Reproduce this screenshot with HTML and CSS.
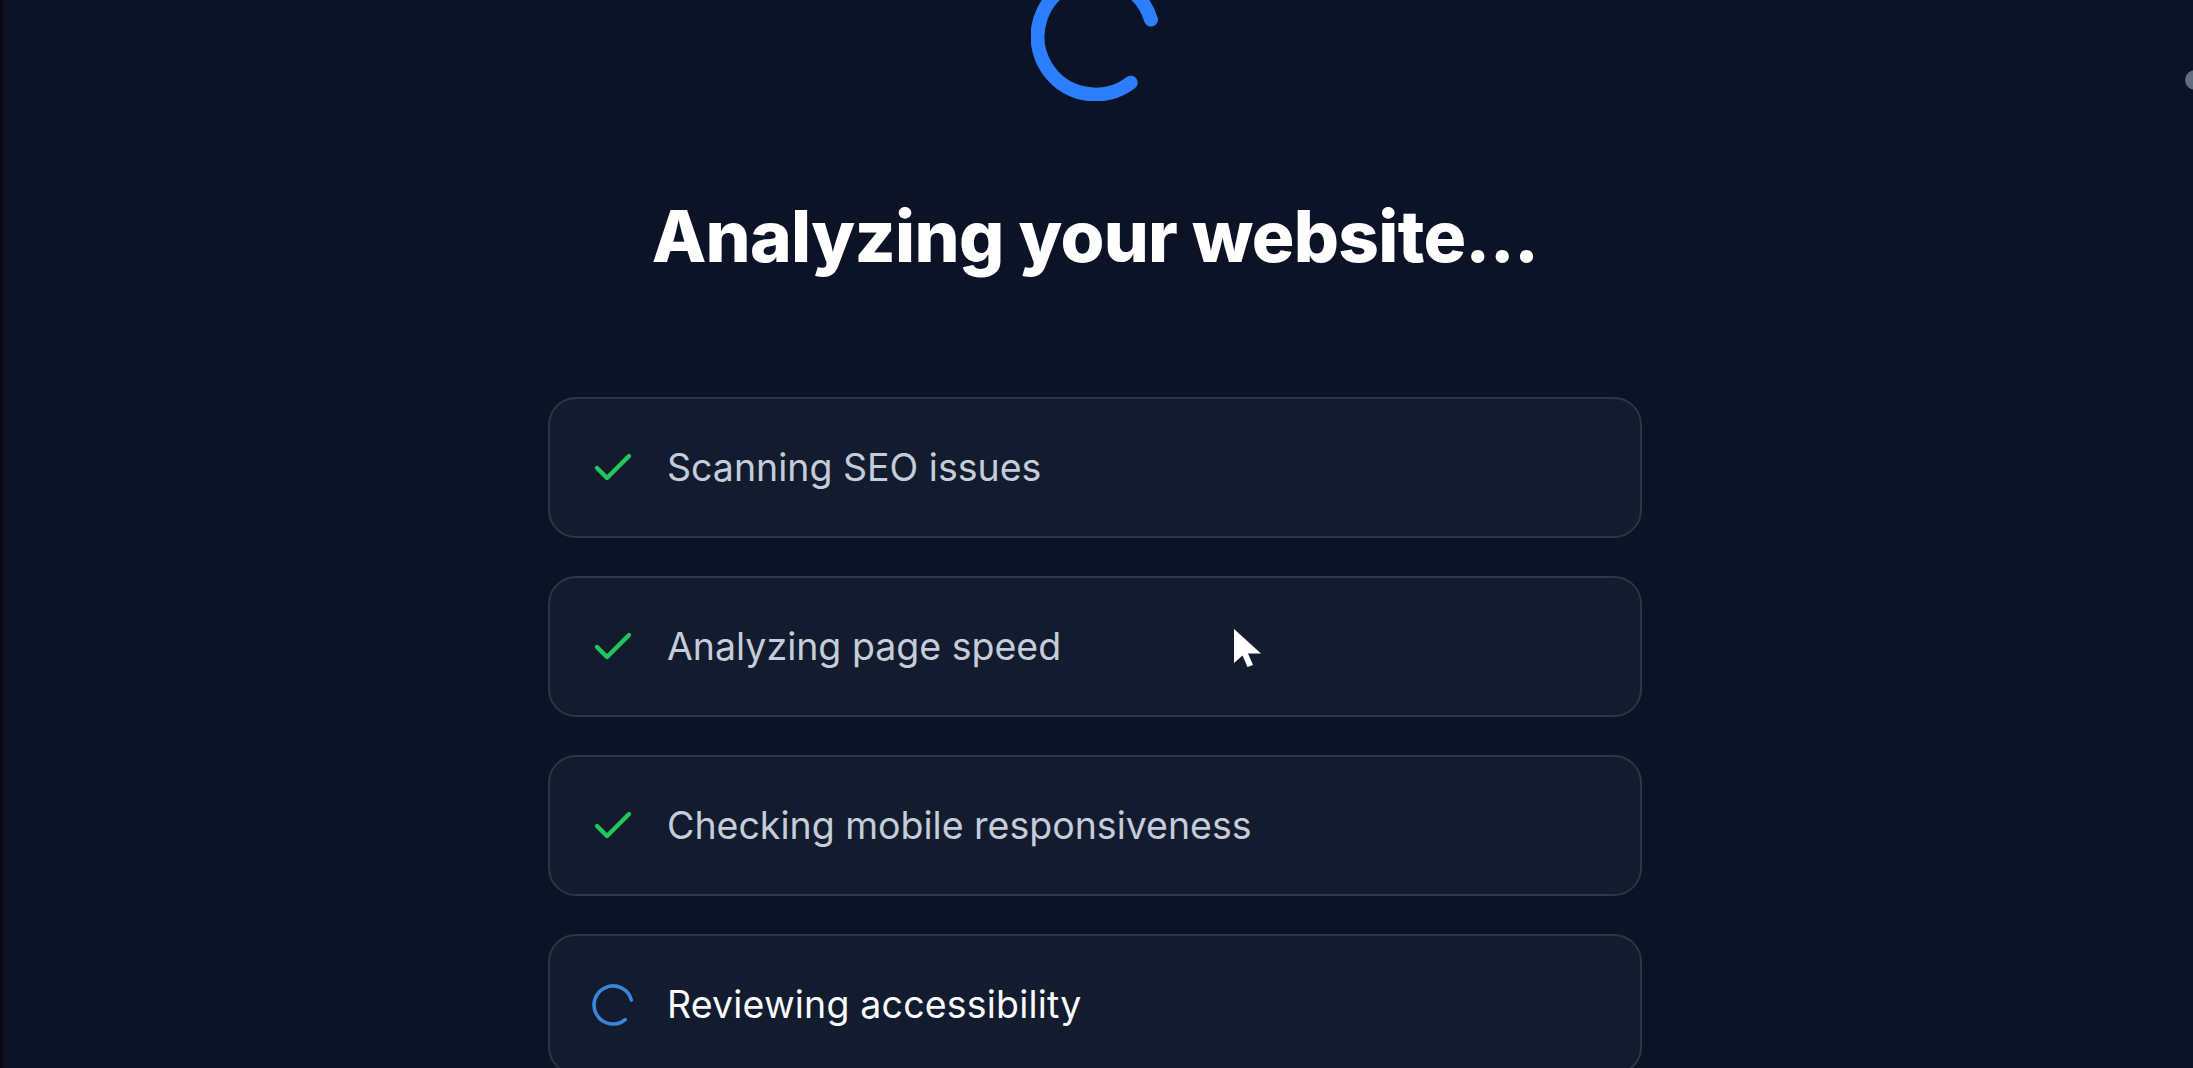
FILE: index.html
```html
<!DOCTYPE html>
<html lang="en">
<head>
  <meta charset="UTF-8">
  <title>Analyzing your website</title>
  <link rel="stylesheet" href="styles.css">
</head>
<body>
  <div class="page">
    <!-- big spinner, top is scrolled out of view -->
    <svg class="spinner-big" viewBox="0 0 128 128" fill="none">
      <path d="M120 46.5A58 58 0 1 0 99.7 109.7" stroke="#2b7fff" stroke-width="14" stroke-linecap="round"/>
    </svg>

    <h1 class="titulo">Analyzing your website...</h1>

    <div class="lista-passos">
      <div class="passo">
        <svg class="passo-icone" viewBox="0 0 24 24" fill="none"><path d="M20 6 9 17l-5-5" stroke="#22c55e" stroke-width="2.2" stroke-linecap="round" stroke-linejoin="round"/></svg>
        <span>Scanning SEO issues</span>
      </div>
      <div class="passo">
        <svg class="passo-icone" viewBox="0 0 24 24" fill="none"><path d="M20 6 9 17l-5-5" stroke="#22c55e" stroke-width="2.2" stroke-linecap="round" stroke-linejoin="round"/></svg>
        <span>Analyzing page speed</span>
      </div>
      <div class="passo">
        <svg class="passo-icone" viewBox="0 0 24 24" fill="none"><path d="M20 6 9 17l-5-5" stroke="#22c55e" stroke-width="2.2" stroke-linecap="round" stroke-linejoin="round"/></svg>
        <span>Checking mobile responsiveness</span>
      </div>
      <div class="passo ativo">
        <svg class="passo-icone" viewBox="0 0 48 48" fill="none"><path d="M42.4 19.1A19 19 0 1 0 36.2 38.6" stroke="#3b86dc" stroke-width="3.6" stroke-linecap="round"/></svg>
        <span>Reviewing accessibility</span>
      </div>
    </div>
  </div>

  <!-- mouse pointer from the recording -->
  <svg class="cursor" viewBox="0 0 28 40"><path d="M1 1V35L9.5 27.5L14.5 39L20 37L15 25.5H28Z" fill="#fff"/></svg>
  <div class="ponto-scroll"></div>
</body>
</html>
```

FILE: styles.css
```css
html, body {
  height: 100%;
  margin: 0;
  overflow: hidden;
}

body {
  background-color: #0c1326;
  font-family: 'Inter', 'Liberation Sans', sans-serif;
}

.page {
  display: flex;
  flex-direction: column;
  align-items: center;
  border-left: 3px solid #05080f;
  padding-right: 6px;
  height: 100%;
}

.spinner-big {
  width: 128px;
  height: 128px;
  margin-top: -27px;
  flex-shrink: 0;
}

.titulo {
  color: #ffffff;
  font-size: 71px;
  font-weight: 800;
  line-height: 80px;
  letter-spacing: -0.7px;
  font-variant-ligatures: none;
  margin: 95px 0 0;
}

.lista-passos {
  display: flex;
  flex-direction: column;
  gap: 38px;
  width: 1094px;
  margin-top: 121px;
}

.passo {
  display: flex;
  align-items: center;
  gap: 30px;
  box-sizing: border-box;
  height: 141px;
  flex-shrink: 0;
  padding: 0 39px;
  background-color: #131c2e;
  border: 2px solid #2d3547;
  border-radius: 28px;
  color: #c5ccda;
  font-size: 37.5px;
}

.passo-icone {
  width: 48px;
  height: 48px;
  flex-shrink: 0;
}

.ativo {
  color: #f8fafc;
  letter-spacing: 0.18px;
}

.cursor {
  position: absolute;
  left: 1233px;
  top: 628px;
  width: 28px;
  height: 40px;
}

.ponto-scroll {
  position: absolute;
  left: 2185px;
  top: 70px;
  width: 20px;
  height: 20px;
  border-radius: 50%;
  background-color: #5d6e7e;
}
```
